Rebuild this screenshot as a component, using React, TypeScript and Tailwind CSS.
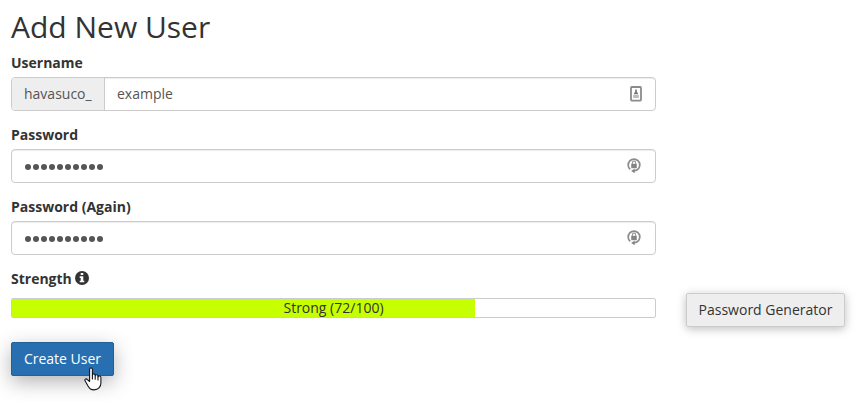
import React from "react";

const field =
  "flex h-[34px] w-[645px] items-center rounded-[4px] border border-[#ccc] bg-white shadow-[inset_0_1px_1px_rgba(0,0,0,0.075)]";

function Label({ children }: { children: React.ReactNode }) {
  return <div className="mb-[4px] flex h-[20px] items-center font-bold text-[#333]">{children}</div>;
}

function ContactIcon() {
  return (
    <svg width="12" height="16" viewBox="0 0 12 16" fill="none" className="mr-[13px]">
      <rect x="1" y="1" width="10" height="13.6" rx="0.8" stroke="#8c8c8c" strokeWidth="1.8" />
      <path d="M5.2 3.4h1.6v2.2l1.6 2.6H3.6l1.6-2.6z" fill="#777" />
      <path d="M3.2 9h5.6v3H3.2z" fill="#bcbcbc" />
    </svg>
  );
}

function LockIcon() {
  return (
    <svg width="14" height="18" viewBox="0 0 14 18" fill="none" className="mr-[14px]">
      <path d="M3.2 12.3A5.8 5.8 0 1 1 10.8 12.3Q9.3 13.6 6.8 13.7" stroke="#8c8c8c" strokeWidth="1.7" />
      <path d="M7.6 11.6v4.6L4.2 13.9z" fill="#858585" />
      <rect x="4.2" y="6.8" width="5.6" height="4.4" fill="#858585" />
      <path d="M5.4 7V5.7a1.6 1.6 0 0 1 3.2 0V7" stroke="#999" strokeWidth="1.1" />
    </svg>
  );
}

function PasswordField({ label }: { label: string }) {
  return (
    <div className="mb-[14px]">
      <Label>{label}</Label>
      <div className={`${field} justify-between pl-[13px]`}>
        <div className="mt-[2px] flex gap-[1.6px]">
          {Array.from({ length: 10 }, (_, i) => (
            <span key={i} className="size-[6.4px] rounded-full bg-[#555]" />
          ))}
        </div>
        <LockIcon />
      </div>
    </div>
  );
}

function HandCursor() {
  return (
    <svg
      width="19"
      height="25"
      viewBox="0 0 19 25"
      className="absolute left-[72px] top-[24px]"
      fill="#fff"
      stroke="#16161e"
      strokeWidth="1.1"
      strokeLinejoin="round"
      strokeLinecap="round"
    >
      <path d="M5.6 14.5V2.2C5.6.4 8.4.4 8.4 2.2V8c.1-1.6 2.8-1.5 2.8.2v.6c.2-1.5 2.8-1.3 2.8.4v.6c.3-1.3 2.9-1 2.9.7v5.4c0 3.4-2.2 7-6.9 7-3.2 0-4.8-1.5-6-3.9L1.1 13.8c-.8-1.5.9-2.5 2.2-1.3z" />
      <path d="M8.4 8v4M11.2 8.8v3.4M14 9.8V13" fill="none" />
    </svg>
  );
}

export default function App() {
  return (
    <main className="h-[402px] w-[857px] overflow-hidden bg-white pl-[11px] pt-[10px] font-['Open_Sans',sans-serif] text-[14px] leading-[20px] text-[#333]">
      <h1 className="mb-[10px] h-[33px] text-[30px] leading-[33px]">Add New User</h1>
      <div className="mb-[14px]">
        <Label>Username</Label>
        <div className={`${field} text-[#555]`}>
          <span className="flex h-full w-[93px] items-center rounded-l-[3px] border-r border-[#ccc] bg-[#eee] pl-[12px]">
            havasuco_
          </span>
          <span className="flex-1 pl-[12px]">example</span>
          <ContactIcon />
        </div>
      </div>
      <PasswordField label="Password" />
      <PasswordField label="Password (Again)" />
      <div className="flex">
        <div>
          <Label>
            Strength
            <svg width="14" height="14" viewBox="0 0 14 14" className="mb-[2px] ml-[3px]">
              <circle cx="7" cy="7" r="7" fill="#333" />
              <path d="M5.7 2h2.6v2H5.7zM4.7 5.3h3.6v4.4h1v1.6H4.7V9.7h1V6.9h-1z" fill="#fff" />
            </svg>
          </Label>
          <div className="mt-[9px] grid h-[20px] w-[645px] overflow-hidden rounded-[2px] border border-[#ccc]">
            <div className="col-start-1 row-start-1 h-[18px] w-[72%] bg-[#c6ff00]" />
            <div className="col-start-1 row-start-1 h-[18px] text-center leading-[18px]">Strong (72/100)</div>
          </div>
        </div>
        <button className="ml-[30px] mt-[24px] h-[34px] w-[159px] rounded-[2px] border border-[#ccc] bg-[#eee] shadow-[0_2px_10px_rgba(0,0,0,0.26)]">
          Password Generator
        </button>
      </div>
      <button className="relative mt-[15px] h-[34px] w-[103px] rounded-[2px] border border-[#245f96] bg-[#286fb1] text-white shadow-[0_6px_20px_rgba(0,0,0,0.3)]">
        Create User
        <HandCursor />
      </button>
    </main>
  );
}
